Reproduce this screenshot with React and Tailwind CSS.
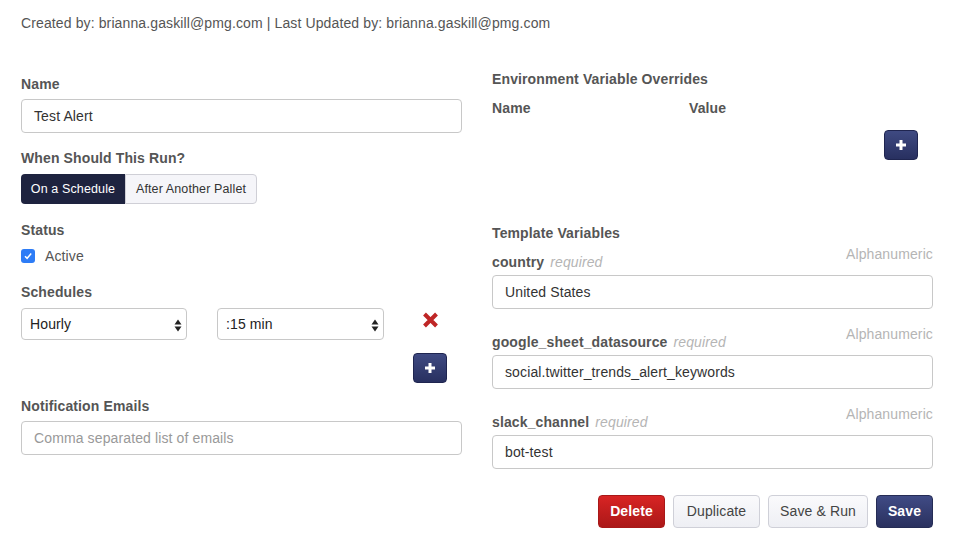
import React from "react";

const font = { fontFamily: '"Liberation Sans", Arial, sans-serif' };

function PlusBtn({ className = "" }) {
  return (
    <button className={"flex h-[30px] w-[34px] items-center justify-center rounded-[4px] border border-[#1f2550] bg-gradient-to-b from-[#3f4a82] to-[#283060] " + className}>
      <svg width="12" height="12" viewBox="0 0 12 12">
        <path d="M6 1v10M1 6h10" stroke="#fff" strokeWidth="3" />
      </svg>
    </button>
  );
}

function SelectArrows() {
  return (
    <svg width="8" height="13" viewBox="0 0 8 13" className="absolute right-[4px] top-[10px]">
      <path d="M4 0.5L7.5 5.5H0.5Z" fill="#222" />
      <path d="M4 12.5L7.5 7.5H0.5Z" fill="#222" />
    </svg>
  );
}

function Select({ value, width }) {
  return (
    <div className={"relative flex h-[32px] items-center rounded-[4px] border border-[#c8c8c8] bg-white pl-[8px] text-[14px] text-[#222] " + width}>
      {value}
      <SelectArrows />
    </div>
  );
}

function Input({ value, placeholder }) {
  return (
    <div className="flex h-[34px] w-full items-center rounded-[4px] border border-[#c8c8c8] bg-white px-[12px] text-[14px]">
      {value ? <span className="text-[#333]">{value}</span> : <span className="text-[#999]">{placeholder}</span>}
    </div>
  );
}

function Label({ children, className = "" }) {
  return <div className={"h-[20px] text-[14px] font-bold leading-[20px] text-[#555] " + className}>{children}</div>;
}

function TemplateVar({ name, value, className = "" }) {
  return (
    <div className={className}>
      <div className="flex items-start justify-between">
        <div className="mt-[8px] h-[20px] text-[14px] leading-[20px]">
          <span className="font-bold text-[#555]">{name}</span>
          <span className="ml-[6px] italic text-[#b5b5b5]">required</span>
        </div>
        <div className="h-[20px] text-[14px] leading-[20px] text-[#b5b5b5]">Alphanumeric</div>
      </div>
      <div className="mt-[3px]">
        <Input value={value} />
      </div>
    </div>
  );
}

export default function App() {
  return (
    <div className="h-[555px] w-[959px] bg-white pl-[21px] pr-[26px] pt-[13px] tracking-[0.12px]" style={font}>
      <div className="h-[20px] text-[14px] leading-[20px] text-[#555]">
        Created by: brianna.gaskill@pmg.com | Last Updated by: brianna.gaskill@pmg.com
      </div>
      <div className="flex gap-[30px]">
        {/* Left column */}
        <div className="flex w-[441px] flex-col">
          <Label className="mt-[41px]">Name</Label>
          <div className="mt-[5px]">
            <Input value="Test Alert" />
          </div>
          <Label className="mt-[15px]">When Should This Run?</Label>
          <div className="mt-[6px] flex h-[30px] text-[12.5px]">
            <div className="flex w-[104px] items-center justify-center rounded-l-[4px] bg-[#1e233f] text-white">On a Schedule</div>
            <div className="flex w-[132px] items-center justify-center rounded-r-[4px] border border-[#cfcfd6] bg-[#f5f5f9] text-[#333]">After Another Pallet</div>
          </div>
          <Label className="mt-[16px]">Status</Label>
          <div className="mt-[6px] flex h-[20px] items-center">
            <div className="flex h-[14px] w-[14px] items-center justify-center rounded-[3px] bg-[#2d7cf6]">
              <svg width="10" height="10" viewBox="0 0 10 10">
                <path d="M2 5.2L4.1 7.3L8.2 2.6" stroke="#fff" strokeWidth="1.5" fill="none" />
              </svg>
            </div>
            <span className="ml-[10px] text-[14px] text-[#555]">Active</span>
          </div>
          <Label className="mt-[16px]">Schedules</Label>
          <div className="mt-[6px] flex items-center">
            <Select value="Hourly" width="w-[166px]" />
            <div className="ml-[30px]">
              <Select value=":15 min" width="w-[167px]" />
            </div>
            <div className="ml-[29px] flex h-[32px] w-[34px] items-start justify-center pt-[4px]">
              <svg width="17" height="16" viewBox="0 0 17 16">
                <path d="M2.5 2L14.5 14M14.5 2L2.5 14" stroke="#bf2626" strokeWidth="4" />
              </svg>
            </div>
          </div>
          <PlusBtn className="ml-[392px] mt-[13px]" />
          <Label className="mt-[13px]">Notification Emails</Label>
          <div className="mt-[5px]">
            <Input placeholder="Comma separated list of emails" />
          </div>
        </div>
        {/* Right column */}
        <div className="flex w-[441px] flex-col">
          <Label className="mt-[36px]">Environment Variable Overrides</Label>
          <div className="mt-[9px] flex">
            <Label className="w-[197px]">Name</Label>
            <Label>Value</Label>
          </div>
          <PlusBtn className="ml-[392px] mt-[12px]" />
          <Label className="mt-[63px]">Template Variables</Label>
          <TemplateVar name="country" value="United States" className="mt-[1px]" />
          <TemplateVar name="google_sheet_datasource" value="social.twitter_trends_alert_keywords" className="mt-[15px]" />
          <TemplateVar name="slack_channel" value="bot-test" className="mt-[15px]" />
          <div className="mt-[26px] flex justify-end gap-[8px] text-[14px]">
            <button className="h-[33px] w-[67px] rounded-[4px] border border-[#a81818] bg-gradient-to-b from-[#d82424] to-[#ab1818] font-bold text-white">Delete</button>
            <button className="h-[33px] w-[87px] rounded-[4px] border border-[#cfd0d8] bg-gradient-to-b from-[#fafafc] to-[#eeeff4] text-[#444]">Duplicate</button>
            <button className="h-[33px] w-[100px] rounded-[4px] border border-[#cfd0d8] bg-gradient-to-b from-[#fafafc] to-[#eeeff4] text-[#444]">Save &amp; Run</button>
            <button className="h-[33px] w-[57px] rounded-[4px] border border-[#252c55] bg-gradient-to-b from-[#404b85] to-[#2a315f] font-bold text-white">Save</button>
          </div>
        </div>
      </div>
    </div>
  );
}
